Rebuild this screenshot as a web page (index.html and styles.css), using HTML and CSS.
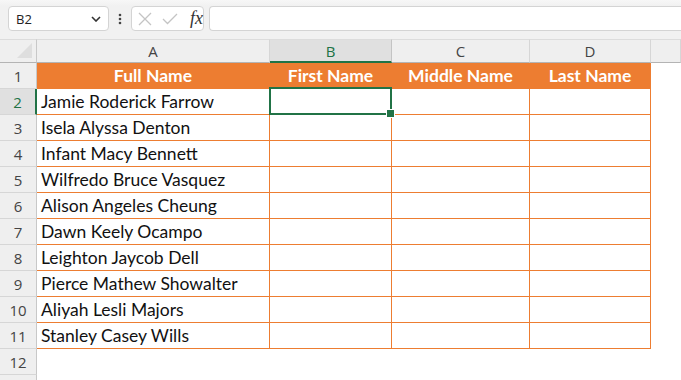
FILE: index.html
```html
<!DOCTYPE html>
<html lang="en">
<head>
    <meta charset="UTF-8">
    <meta name="viewport" content="width=device-width, initial-scale=1.0">
    <title>Split Names</title>
    <link rel="stylesheet" href="styles.css">
</head>
<body>
    <div class="formula-bar">
        <div class="name-box">
            <span>B2</span>
            <svg class="chevron" width="10" height="6" viewBox="0 0 10 6"><path d="M1 1 L5 5 L9 1" fill="none" stroke="#333" stroke-width="1.6"/></svg>
        </div>
        <div class="dots">
            <svg width="4" height="12" viewBox="0 0 4 12"><circle cx="2" cy="2" r="1.3" fill="#444"/><circle cx="2" cy="6" r="1.3" fill="#444"/><circle cx="2" cy="10" r="1.3" fill="#444"/></svg>
        </div>
        <div class="actions">
            <svg width="14" height="14" viewBox="0 0 14 14"><path d="M1 1 L13 13 M13 1 L1 13" stroke="#c4c4c4" stroke-width="1.3"/></svg>
            <svg width="16" height="12" viewBox="0 0 16 12"><path d="M1 6 L5.5 10.5 L15 1" fill="none" stroke="#c4c4c4" stroke-width="1.3"/></svg>
            <span class="fx">fx</span>
        </div>
        <div class="formula-input"></div>
    </div>

    <div class="sheet">
        <div class="corner"><span class="triangle"></span></div>
        <div class="col-head">A</div>
        <div class="col-head active">B</div>
        <div class="col-head">C</div>
        <div class="col-head">D</div>
        <div class="col-head"></div>

        <div class="row-head">1</div>
        <div class="cell title">Full Name</div>
        <div class="cell title">First Name</div>
        <div class="cell title">Middle Name</div>
        <div class="cell title">Last Name</div>
        <div class="blank"></div>

        <div class="row-head active">2</div>
        <div class="cell">Jamie Roderick Farrow</div>
        <div class="cell selected"></div>
        <div class="cell"></div>
        <div class="cell"></div>
        <div class="blank"></div>

        <div class="row-head">3</div>
        <div class="cell">Isela Alyssa Denton</div>
        <div class="cell"></div>
        <div class="cell"></div>
        <div class="cell"></div>
        <div class="blank"></div>

        <div class="row-head">4</div>
        <div class="cell">Infant Macy Bennett</div>
        <div class="cell"></div>
        <div class="cell"></div>
        <div class="cell"></div>
        <div class="blank"></div>

        <div class="row-head">5</div>
        <div class="cell">Wilfredo Bruce Vasquez</div>
        <div class="cell"></div>
        <div class="cell"></div>
        <div class="cell"></div>
        <div class="blank"></div>

        <div class="row-head">6</div>
        <div class="cell">Alison Angeles Cheung</div>
        <div class="cell"></div>
        <div class="cell"></div>
        <div class="cell"></div>
        <div class="blank"></div>

        <div class="row-head">7</div>
        <div class="cell">Dawn Keely Ocampo</div>
        <div class="cell"></div>
        <div class="cell"></div>
        <div class="cell"></div>
        <div class="blank"></div>

        <div class="row-head">8</div>
        <div class="cell">Leighton Jaycob Dell</div>
        <div class="cell"></div>
        <div class="cell"></div>
        <div class="cell"></div>
        <div class="blank"></div>

        <div class="row-head">9</div>
        <div class="cell">Pierce Mathew Showalter</div>
        <div class="cell"></div>
        <div class="cell"></div>
        <div class="cell"></div>
        <div class="blank"></div>

        <div class="row-head">10</div>
        <div class="cell">Aliyah Lesli Majors</div>
        <div class="cell"></div>
        <div class="cell"></div>
        <div class="cell"></div>
        <div class="blank"></div>

        <div class="row-head">11</div>
        <div class="cell">Stanley Casey Wills</div>
        <div class="cell"></div>
        <div class="cell"></div>
        <div class="cell"></div>
        <div class="blank"></div>

        <div class="row-head">12</div>
        <div class="blank"></div>
        <div class="blank"></div>
        <div class="blank"></div>
        <div class="blank"></div>
        <div class="blank"></div>

        <div class="row-head"></div>
        <div class="blank"></div>
        <div class="blank"></div>
        <div class="blank"></div>
        <div class="blank"></div>
        <div class="blank"></div>
    </div>
</body>
</html>
```

FILE: styles.css
```css
:root {
    --orange: #ED7D31;
    --green: #217346;
    --head-bg: #efefef;
    --head-active: #e0e0e0;
    --head-line: #d6d6d6;
    --head-text: #444444;
}

* {
    box-sizing: border-box;
}

body {
    margin: 0;
    background: #ffffff;
    font-family: "Lato", sans-serif;
    overflow: hidden;
}

/* formula bar */

.formula-bar {
    display: flex;
    align-items: center;
    height: 39px;
    padding: 6px 0 8px 8px;
    background: linear-gradient(#f7f7f7, #f1f1f1 6px);
}

.name-box {
    display: flex;
    align-items: center;
    justify-content: space-between;
    width: 101px;
    height: 25px;
    padding: 0 7px 0 7px;
    background: #ffffff;
    border: 1px solid #d4d4d4;
    border-radius: 4px;
    font-family: "Open Sans", sans-serif;
    font-size: 13px;
    color: #222;
}

.dots {
    display: flex;
    width: 22px;
    justify-content: center;
}

.actions {
    display: flex;
    align-items: center;
    gap: 10px;
    width: 73px;
    height: 25px;
    padding: 0 0 0 6px;
    background: #ffffff;
    border: 1px solid #d4d4d4;
    border-radius: 4px;
}

.fx {
    font-family: "Liberation Serif", serif;
    font-style: italic;
    font-size: 18px;
    color: #333;
    margin-left: 2px;
}

.formula-input {
    flex: 1;
    height: 25px;
    margin-left: 5px;
    background: #ffffff;
    border: 1px solid #d4d4d4;
    border-right: none;
    border-radius: 4px 0 0 4px;
}

/* grid */

.sheet {
    display: grid;
    grid-template-columns: 37px 233px 122px 138px 121px 1fr;
    grid-template-rows: 24px repeat(13, 26px);
}

.corner {
    position: relative;
    background: var(--head-bg);
    border-right: 1px solid #c8c8c8;
    border-bottom: 1px solid #b4b4b4;
    border-top: 1px solid #dcdcdc;
}

.triangle {
    position: absolute;
    right: 4px;
    bottom: 4px;
    width: 0;
    height: 0;
    border-left: 15px solid transparent;
    border-bottom: 15px solid #dedede;
}

.col-head {
    display: flex;
    align-items: center;
    justify-content: center;
    background: var(--head-bg);
    border-top: 1px solid #dcdcdc;
    border-right: 1px solid var(--head-line);
    border-bottom: 1px solid #b4b4b4;
    font-family: "Open Sans", sans-serif;
    font-size: 15px;
    color: var(--head-text);
}

.col-head:last-child {
    border-right: none;
}

.col-head.active {
    background: var(--head-active);
    color: var(--green);
    border-bottom: 2px solid var(--green);
    border-right-color: #c4c4c4;
}

.row-head {
    display: flex;
    align-items: center;
    justify-content: center;
    background: var(--head-bg);
    border-right: 1px solid #c8c8c8;
    border-bottom: 1px solid var(--head-line);
    font-family: "Open Sans", sans-serif;
    font-size: 15px;
    color: var(--head-text);
}

.row-head.active {
    background: var(--head-active);
    color: var(--green);
    border-right: 2px solid var(--green);
}

.cell {
    display: flex;
    align-items: center;
    padding: 0 4px;
    border-right: 1px solid var(--orange);
    border-bottom: 1px solid var(--orange);
    font-size: 17.5px;
    color: #111;
    white-space: nowrap;
}

.cell.title {
    justify-content: center;
    background: var(--orange);
    color: #ffffff;
    font-weight: 700;
}

.cell.selected {
    position: relative;
}

.cell.selected::after {
    content: "";
    position: absolute;
    inset: -2px -1px -1px -1px;
    border: 2px solid var(--green);
}

.cell.selected::before {
    content: "";
    position: absolute;
    right: -4px;
    bottom: -4px;
    width: 7px;
    height: 7px;
    background: var(--green);
    border: 1px solid #ffffff;
    z-index: 1;
}

.blank {
    background: #ffffff;
}
```
